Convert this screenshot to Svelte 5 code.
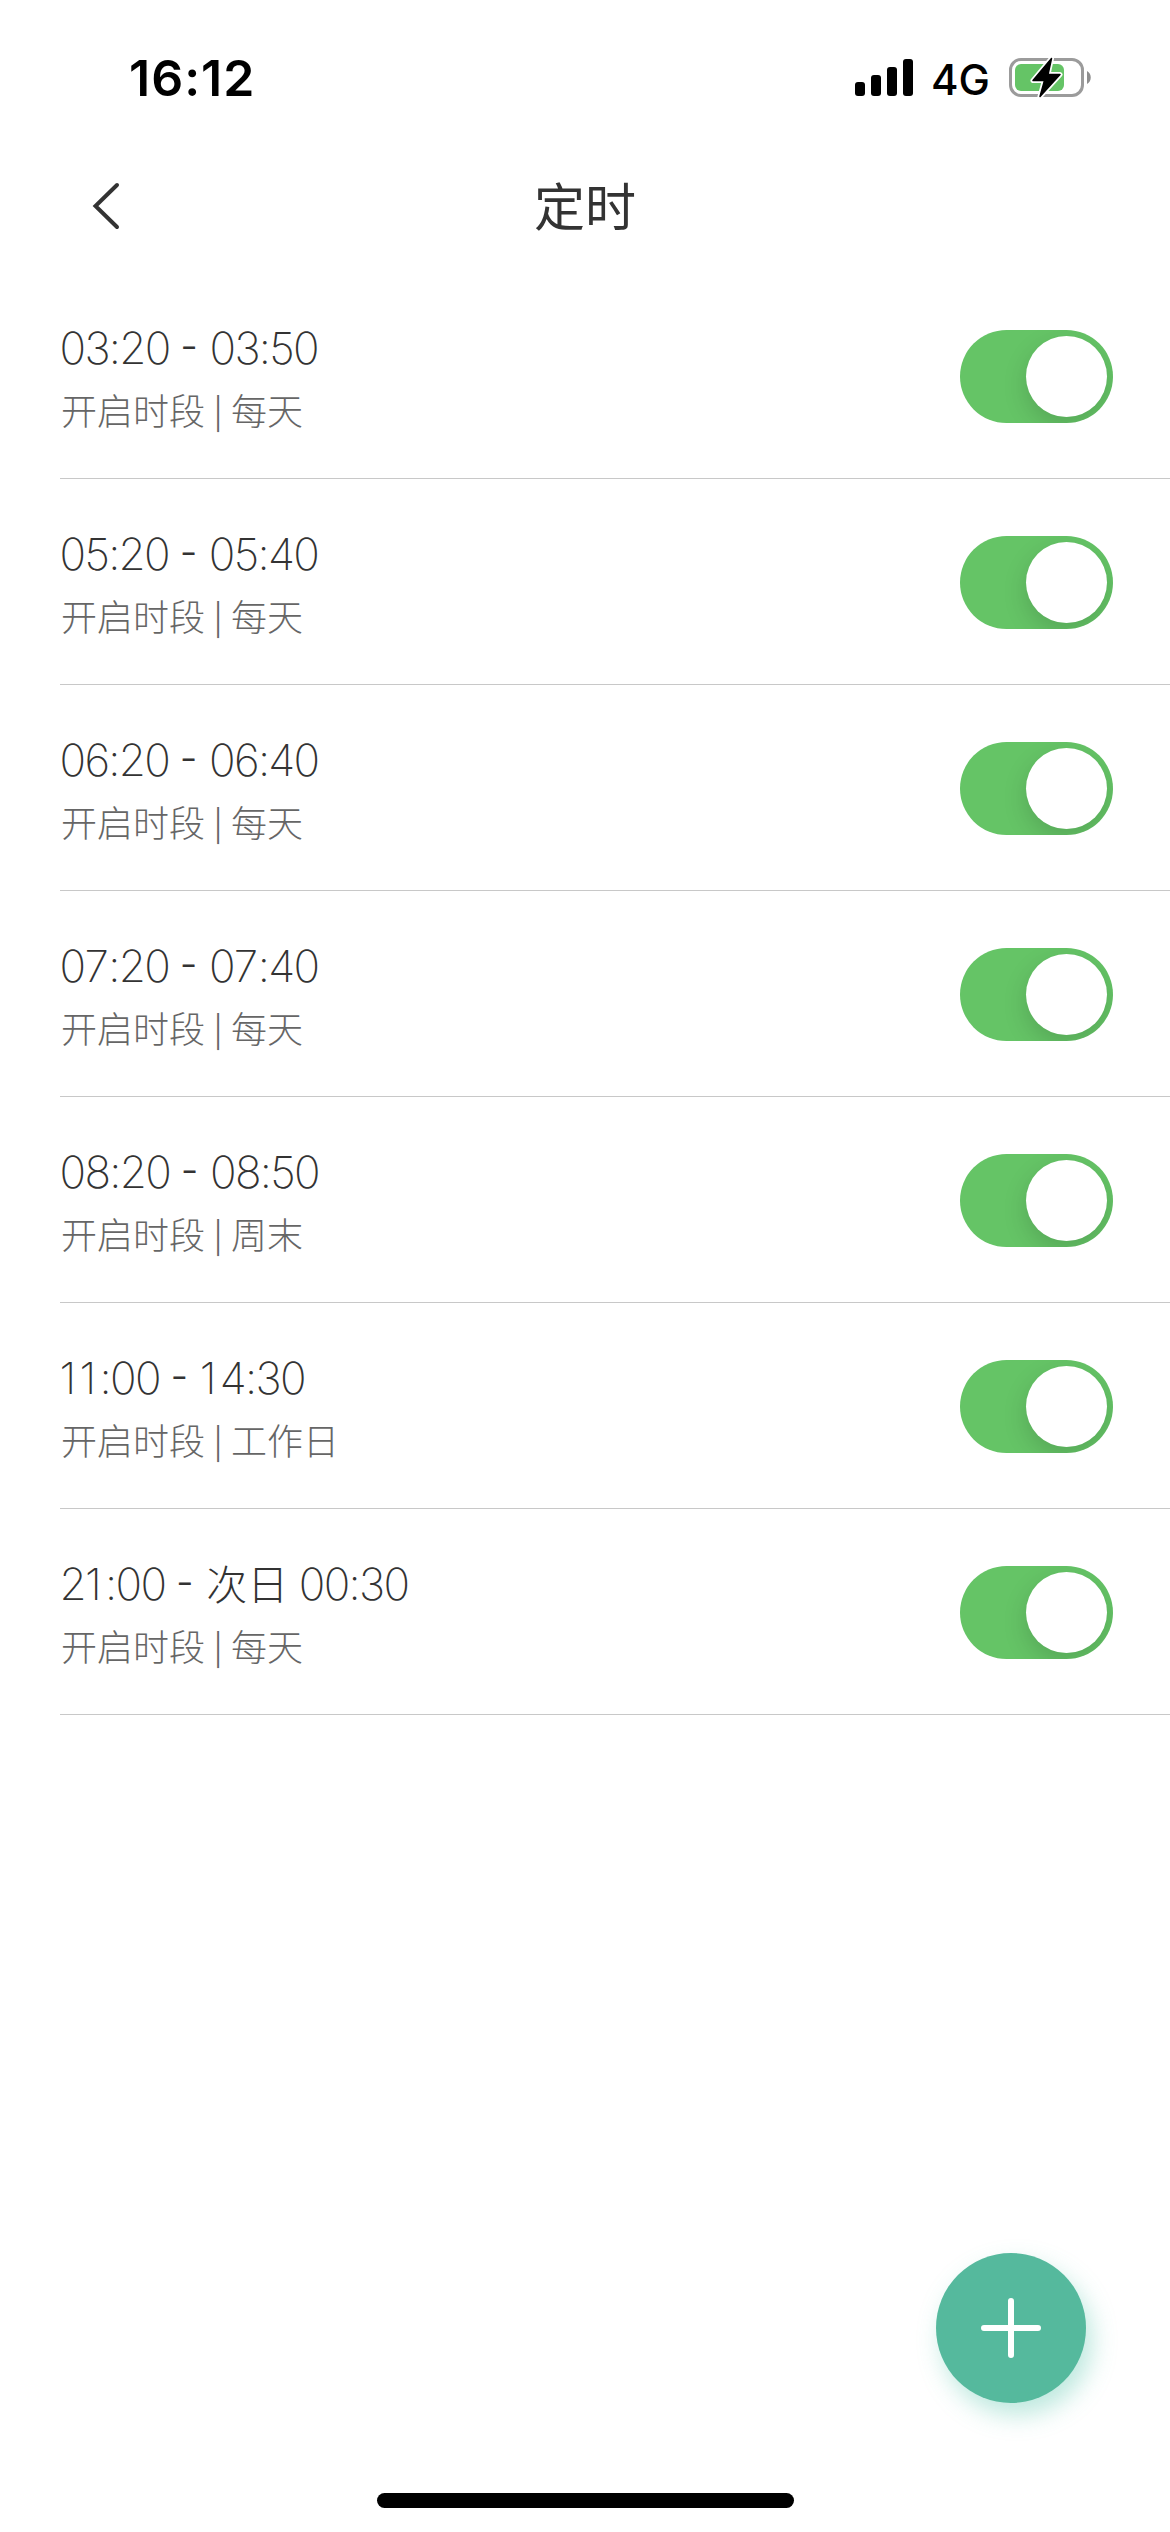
<script lang="ts">
  interface Timer {
    id: number;
    start: string;
    end: string;
    nextDay?: boolean;
    repeat: string;
    enabled: boolean;
  }

  let timers: Timer[] = $state([
    { id: 1, start: '03:20', end: '03:50', repeat: '每天', enabled: true },
    { id: 2, start: '05:20', end: '05:40', repeat: '每天', enabled: true },
    { id: 3, start: '06:20', end: '06:40', repeat: '每天', enabled: true },
    { id: 4, start: '07:20', end: '07:40', repeat: '每天', enabled: true },
    { id: 5, start: '08:20', end: '08:50', repeat: '周末', enabled: true },
    { id: 6, start: '11:00', end: '14:30', repeat: '工作日', enabled: true },
    { id: 7, start: '21:00', end: '00:30', nextDay: true, repeat: '每天', enabled: true }
  ]);

  function toggle(timer: Timer) {
    timer.enabled = !timer.enabled;
  }
</script>

<!-- narrow digits get a little extra room so the times line up -->
{#snippet digits(value: string)}{#each value.split('') as char}<span class:one={char === '1'} class:seven={char === '7'}>{char}</span>{/each}{/snippet}

<div class="screen">
  <div class="status-bar">
    <span class="clock">16:12</span>
    <div class="indicators">
      <svg class="signal" width="58" height="38" viewBox="0 0 58 38">
        <rect x="0" y="23" width="10" height="14" rx="3" />
        <rect x="16" y="16" width="10" height="21" rx="3" />
        <rect x="32" y="8" width="10" height="29" rx="3" />
        <rect x="48" y="0" width="10" height="37" rx="3" />
      </svg>
      <span class="network">4G</span>
      <svg class="battery" width="83" height="42" viewBox="0 0 83 42">
        <rect x="1.5" y="2.5" width="72" height="36" rx="10.5" fill="none" stroke="#9b9b9b" stroke-width="3" />
        <path d="M78 14c5 2.500 5 10.500 0 13z" fill="#8e8e8e" />
        <rect x="6" y="7" width="49" height="27" rx="6" fill="#65c466" />
        <path
          d="M42.500 1.500L24 23.500H35.500L31 39.500L51 17.500H39Z"
          fill="#000"
          stroke="#fff"
          stroke-width="5"
          stroke-linejoin="round"
          paint-order="stroke"
        />
        <path
          d="M42.500 1.500L24 23.500H35.500L31 39.500L51 17.500H39Z"
          fill="#000"
          stroke="#000"
          stroke-width="1.5"
          stroke-linejoin="round"
        />
      </svg>
    </div>
  </div>

  <header>
    <button class="back" aria-label="返回">
      <svg width="30" height="58" viewBox="0 0 30 58">
        <path d="M26 7L4.500 28L26 49" fill="none" stroke="#333" stroke-width="4" stroke-linecap="round" />
      </svg>
    </button>
    <h1>定时</h1>
  </header>

  <ul class="timers">
    {#each timers as timer (timer.id)}
      <li>
        <div class="info">
          <p class="time">
            {@render digits(timer.start)} <span class="dash">-</span>
            {#if timer.nextDay}<span class="day">次日</span>{/if}
            {@render digits(timer.end)}
          </p>
          <p class="repeat">开启时段<span class="divider">|</span>{timer.repeat}</p>
        </div>
        <button
          class="switch"
          class:on={timer.enabled}
          role="switch"
          aria-checked={timer.enabled}
          aria-label={timer.start}
          onclick={() => toggle(timer)}
        >
          <span class="knob"></span>
        </button>
      </li>
    {/each}
  </ul>

  <footer>
    <button class="add" aria-label="添加">
      <svg width="60" height="60" viewBox="0 0 60 60">
        <path d="M30 3V57M3 30H57" stroke="#fff" stroke-width="6" stroke-linecap="round" />
      </svg>
    </button>
    <div class="home-indicator"></div>
  </footer>
</div>

<style>
  :global(body) {
    background: #fff;
  }

  .screen {
    display: flex;
    flex-direction: column;
    width: 1170px;
    height: 2532px;
    background: #fff;
    color: #333;
    font-family: Inter, 'Noto Sans CJK SC', sans-serif;
    overflow: hidden;
  }

  button {
    padding: 0;
    border: none;
    background: none;
    cursor: pointer;
  }

  svg {
    display: block;
  }

  .status-bar {
    display: flex;
    justify-content: space-between;
    align-items: center;
    box-sizing: border-box;
    height: 141px;
    padding: 15px 78px 0 129px;
    color: #000;
  }

  .clock {
    font-size: 50px;
    font-weight: 600;
    letter-spacing: 1px;
  }

  .indicators {
    display: flex;
    align-items: center;
  }

  .network {
    margin: 4px 19px 0 18px;
    font-size: 42px;
    font-weight: 450;
    line-height: 50px;
  }

  header {
    display: grid;
    grid-template-columns: 180px 1fr 180px;
    align-items: center;
    height: 132px;
  }

  .back {
    justify-self: start;
    margin-left: 91px;
  }

  h1 {
    margin: 1px 0 0;
    font-size: 51px;
    font-weight: 400;
    line-height: 70px;
    text-align: center;
  }

  .timers {
    flex: 1;
    margin: 0;
    padding: 0 0 0 60px;
    list-style: none;
  }

  li {
    display: flex;
    justify-content: space-between;
    align-items: flex-start;
    box-sizing: border-box;
    height: 206px;
    padding: 57px 57px 0 0;
    border-bottom: 1px solid #c8c8c8;
  }

  .info {
    margin-top: -10px;
  }

  p {
    margin: 0;
    white-space: nowrap;
  }

  .time {
    height: 56px;
    margin-left: -0.5px;
    font-size: 44px;
    font-weight: 200;
    line-height: 56px;
    letter-spacing: -1.7px;
    font-kerning: none;
    font-feature-settings: 'calt' 0;
  }

  .one {
    margin-right: 5px;
  }

  .seven {
    margin-right: 1.2px;
  }

  .dash {
    display: inline-block;
    width: 18.5px;
    font-size: 39px;
    font-weight: 300;
    line-height: 1;
    vertical-align: 2px;
    font-feature-settings: 'case' 1;
  }

  .day {
    margin-left: 1px;
    font-size: 41px;
    font-weight: 300;
    letter-spacing: 0;
  }

  .repeat {
    margin-top: 10px;
    padding-left: 1px;
    color: #666;
    font-size: 36px;
    font-weight: 300;
    line-height: 52px;
  }

  .divider {
    display: inline-block;
    width: 26px;
    font-size: 31px;
    line-height: 1;
    text-align: center;
  }

  .switch {
    display: flex;
    box-sizing: border-box;
    width: 153px;
    height: 93px;
    padding: 6px;
    border-radius: 47px;
    background: #e9e9ea;
    overflow: hidden;
  }

  .switch.on {
    justify-content: flex-end;
    background: #65c466;
  }

  .knob {
    width: 81px;
    height: 81px;
    border-radius: 50%;
    background: #fff;
    box-shadow: 0 9px 24px rgba(0, 0, 0, 0.15);
  }

  footer {
    display: flex;
    flex-direction: column;
    align-items: center;
    padding-bottom: 24px;
  }

  .add {
    display: grid;
    place-items: center;
    align-self: flex-end;
    width: 150px;
    height: 150px;
    margin: 0 84px 90px 0;
    border-radius: 50%;
    background: #55b99d;
    box-shadow: 6px 12px 24px rgba(65, 190, 160, 0.35);
  }

  .home-indicator {
    width: 417px;
    height: 15px;
    margin-left: 1px;
    border-radius: 8px;
    background: #000;
  }
</style>
